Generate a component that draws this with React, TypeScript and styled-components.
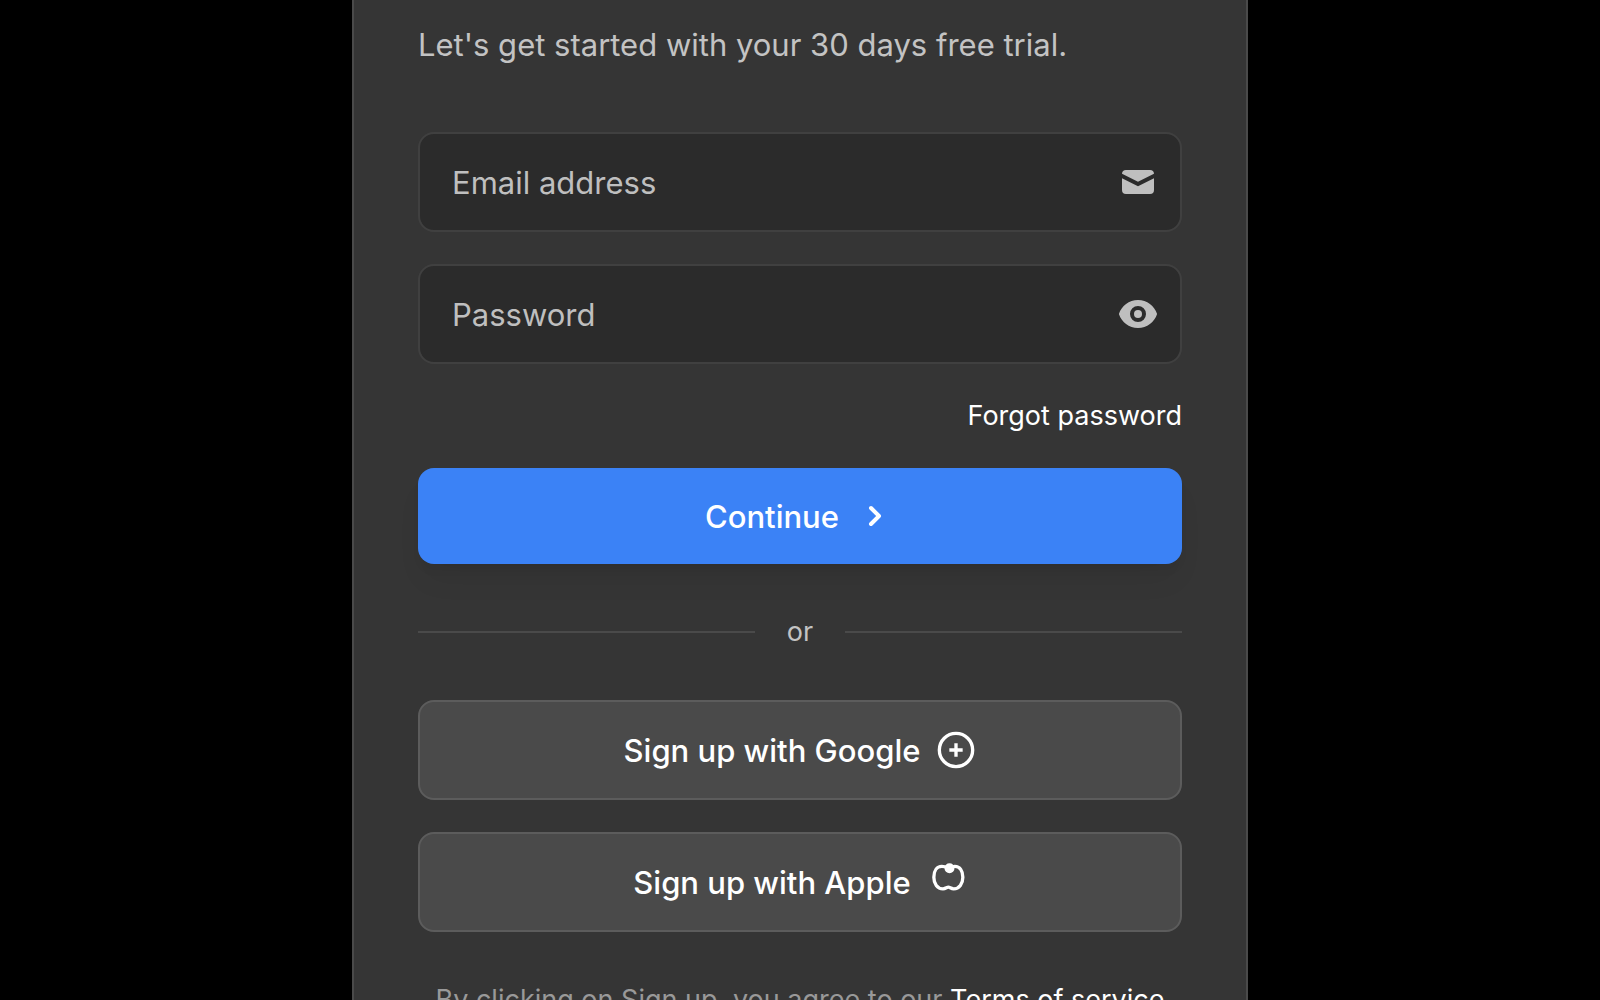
import React from "react";
import styled, { createGlobalStyle, css } from "styled-components";

const GlobalStyle = createGlobalStyle`
  *, *::before, *::after { box-sizing: border-box; }
  body {
    margin: 0;
    background: #000;
    color: #fff;
    font-family: Inter, "Noto Sans", sans-serif;
    font-size: 31px;
    line-height: 48px;
  }
  button, input { font: inherit; color: inherit; }
`;

const Page = styled.main`
  display: flex;
  justify-content: center;
  height: 100vh;
  overflow: hidden;
`;

const Card = styled.form`
  display: flex;
  flex-direction: column;
  flex: 0 1 896px;
  align-self: flex-start;
  min-height: 100vh;
  padding: 21px 64px 64px;
  border: 2px solid #4a4a4a;
  border-width: 0 2px;
  background: #353535;
`;

const Intro = styled.p`
  margin: 0 0 63px;
  color: #c3c3c3;
`;

const Fields = styled.div`
  display: grid;
  gap: 32px;
`;

const Field = styled.label`
  display: flex;
  align-items: center;
  height: 100px;
  padding: 0 22px 0 32px;
  border: 2px solid #404040;
  border-radius: 16px;
  background: #2b2b2b;
  color: #bfbfbf;
`;

const Input = styled.input`
  flex: 1;
  min-width: 0;
  padding: 2px 0 0;
  border: 0;
  outline: 0;
  background: transparent;
  &::placeholder { color: #bfbfbf; opacity: 1; }
`;

const Icon = styled.svg`
  flex: none;
  width: 40px;
  height: 40px;
`;

const Link = styled.a`
  color: #fff;
  text-decoration: none;
`;

const ForgotRow = styled.div`
  display: flex;
  justify-content: flex-end;
  margin: 32px 0;
  font-size: 27px;
  line-height: 40px;
`;

const Button = styled.button<{ $primary?: boolean }>`
  display: flex;
  align-items: center;
  justify-content: center;
  gap: 16px;
  width: 100%;
  padding: 24px 32px;
  border: 2px solid #5c5c5c;
  border-radius: 16px;
  background: #4a4a4a;
  font-weight: 500;
  cursor: pointer;
  ${({ $primary }) =>
    $primary &&
    css`
      border: 0;
      background: #3b82f6;
      box-shadow: 0 20px 30px -6px rgba(0, 0, 0, 0.06), 0 8px 12px -4px rgba(0, 0, 0, 0.06);
    `}
`;

const ButtonLabel = styled.span`
  padding-top: 2px;
  line-height: 46px;
`;

const Divider = styled.div`
  display: flex;
  align-items: center;
  gap: 32px;
  margin: 48px 0;
  color: #c3c3c3;
  font-size: 27px;
  line-height: 40px;
  &::before, &::after {
    content: "";
    flex: 1;
    height: 2px;
    background: #4a4a4a;
  }
`;

const Providers = styled.div`
  display: grid;
  gap: 32px;
`;

const Terms = styled.p`
  margin: 48px 0 0;
  color: #999;
  font-size: 27px;
  line-height: 40px;
  text-align: center;
`;

export default function App() {
  return (
    <>
      <GlobalStyle />
      <Page>
        <Card onSubmit={(e) => e.preventDefault()}>
          <Intro>Let's get started with your 30 days free trial.</Intro>
          <Fields>
            <Field>
              <Input type="email" placeholder="Email address" aria-label="Email address" />
              <Icon viewBox="0 0 20 20" fill="currentColor" aria-hidden="true">
                <path d="M2.003 5.884L10 9.882l7.997-3.998A2 2 0 0016 4H4a2 2 0 00-1.997 1.884z" />
                <path d="M18 8.118l-8 4-8-4V14a2 2 0 002 2h12a2 2 0 002-2V8.118z" />
              </Icon>
            </Field>
            <Field>
              <Input type="password" placeholder="Password" aria-label="Password" />
              <Icon viewBox="0 0 20 20" fill="currentColor" aria-hidden="true">
                <path d="M10 12a2 2 0 100-4 2 2 0 000 4z" />
                <path
                  fillRule="evenodd"
                  d="M.458 10C1.732 5.943 5.522 3 10 3s8.268 2.943 9.542 7c-1.274 4.057-5.064 7-9.542 7S1.732 14.057.458 10zM14 10a4 4 0 11-8 0 4 4 0 018 0z"
                />
              </Icon>
            </Field>
          </Fields>
          <ForgotRow>
            <Link href="#forgot">Forgot password</Link>
          </ForgotRow>
          <Button type="submit" $primary>
            <ButtonLabel>Continue</ButtonLabel>
            <Icon viewBox="0 0 20 20" fill="currentColor" aria-hidden="true">
              <path d="M7.293 14.707a1 1 0 010-1.414L10.586 10 7.293 6.707a1 1 0 011.414-1.414l4 4a1 1 0 010 1.414l-4 4a1 1 0 01-1.414 0z" />
            </Icon>
          </Button>
          <Divider>or</Divider>
          <Providers>
            <Button type="button">
              <ButtonLabel>Sign up with Google</ButtonLabel>
              <Icon viewBox="0 0 24 24" fill="none" stroke="currentColor" strokeWidth="2" aria-hidden="true">
                <circle cx="12" cy="12" r="10" />
                <path d="M12 8v8M8 12h8" />
              </Icon>
            </Button>
            <Button type="button">
              <ButtonLabel>Sign up with Apple</ButtonLabel>
              <Icon viewBox="0 0 24 24" fill="none" stroke="currentColor" strokeWidth="2" strokeLinecap="round" strokeLinejoin="round" aria-hidden="true">
                <path d="M12 3.400C11 2.700 9.900 2.600 8.900 2.600C5.900 2.600 4.100 5.300 4.100 9.100C4.100 13 6.200 16.100 9.600 16.100C11.200 16.100 11.900 15.100 12.800 15.100C13.700 15.100 14.400 16.100 16 16.100C19.400 16.100 21.500 13 21.500 9.100C21.500 5.300 19.700 2.600 16.700 2.600C15.700 2.600 14.600 2.800 13.500 3.600" />
                <circle cx="13.500" cy="3.800" r="2" fill="currentColor" />
              </Icon>
            </Button>
          </Providers>
          <Terms>
            By clicking on Sign up, you agree to our <Link href="#terms">Terms of service</Link> and{" "}
            <Link href="#privacy">Privacy policy</Link>.
          </Terms>
        </Card>
      </Page>
    </>
  );
}
